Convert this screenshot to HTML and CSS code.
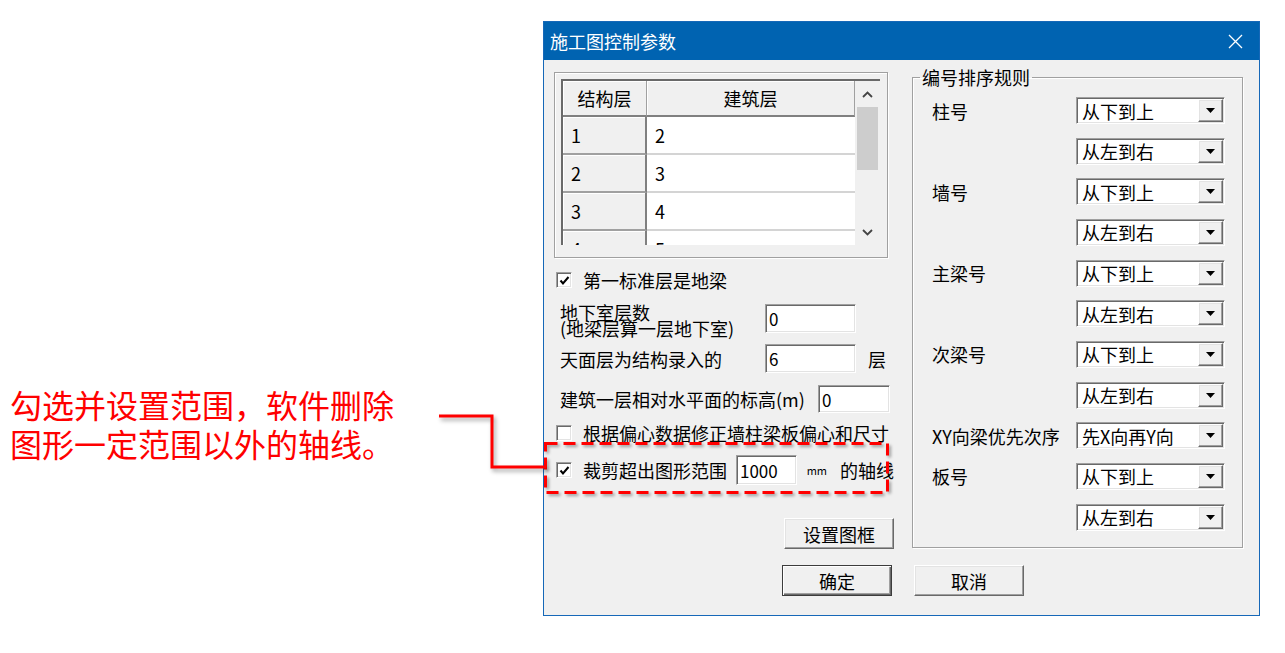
FILE: index.html
```html
<!DOCTYPE html>
<html lang="zh-CN">
<head>
  <meta charset="UTF-8">
  <title>施工图控制参数</title>
  <link rel="stylesheet" href="styles.css">
</head>
<body>
<div class="page">
  <!-- Callout text on the left -->
  <div class="note">
    <p class="note-text">勾选并设置范围，软件删除<br>图形一定范围以外的轴线。</p>
    <svg class="connector" width="112" height="64" viewBox="0 0 112 64">
      <polyline points="3,6 56,6 56,57 110,57" fill="none" stroke="#ff0000" stroke-width="3"/>
    </svg>
  </div>

  <!-- Dialog -->
  <div class="dialog">
    <div class="titlebar">
      <span>施工图控制参数</span>
      <svg class="close" width="15" height="15" viewBox="0 0 15 15">
        <path d="M1 1 L14 14 M14 1 L1 14" stroke="#fff" stroke-width="1.3"/>
      </svg>
    </div>

    <div class="dialog-body">
      <div class="left-col">
        <div class="table-frame">
          <div class="grid-wrap">
            <div class="grid">
              <div class="cell head">结构层</div>
              <div class="cell head">建筑层</div>
              <div class="cell rowhead">1</div>
              <div class="cell data">2</div>
              <div class="cell rowhead">2</div>
              <div class="cell data">3</div>
              <div class="cell rowhead">3</div>
              <div class="cell data">4</div>
              <div class="cell rowhead">4</div>
              <div class="cell data">5</div>
            </div>
            <div class="vscroll">
              <div class="sb-btn">
                <svg width="11" height="7" viewBox="0 0 11 7"><polyline points="1,6 5.5,1.5 10,6" fill="none" stroke="#444" stroke-width="1.8"/></svg>
              </div>
              <div class="sb-thumb"></div>
              <div class="sb-track"></div>
              <div class="sb-btn">
                <svg width="11" height="7" viewBox="0 0 11 7"><polyline points="1,1 5.5,5.5 10,1" fill="none" stroke="#444" stroke-width="1.8"/></svg>
              </div>
            </div>
          </div>
        </div>

        <div class="check-row row-first">
          <span class="checkbox"><svg width="13" height="13" viewBox="0 0 13 13"><polyline points="2.5,6.5 5,9.5 10.5,3" fill="none" stroke="#000" stroke-width="2"/></svg></span>
          <span class="check-text">第一标准层是地梁</span>
        </div>

        <div class="field-row row-basement">
          <span class="field-label two-line">地下室层数<br>(地梁层算一层地下室)</span>
          <span class="textbox tb-mid">0</span>
        </div>

        <div class="field-row row-roof">
          <span class="field-label">天面层为结构录入的</span>
          <span class="textbox tb-mid">6</span>
          <span class="unit">层</span>
        </div>

        <div class="field-row row-level">
          <span class="field-label label-long">建筑一层相对水平面的标高(m)</span>
          <span class="textbox tb-short">0</span>
        </div>

        <div class="check-row row-eccentric">
          <span class="checkbox"></span>
          <span class="check-text">根据偏心数据修正墙柱梁板偏心和尺寸</span>
        </div>

        <div class="check-row row-clip">
          <span class="checkbox"><svg width="13" height="13" viewBox="0 0 13 13"><polyline points="2.5,6.5 5,9.5 10.5,3" fill="none" stroke="#000" stroke-width="2"/></svg></span>
          <span class="check-text">裁剪超出图形范围</span>
          <span class="textbox tb-clip">1000</span>
          <span class="mm">mm</span>
          <span class="axis-text">的轴线</span>
        </div>

        <button class="btn btn-frame">设置图框</button>
      </div>

      <fieldset class="group">
        <legend>编号排序规则</legend>
        <div class="rules">
          <span class="rule-label">柱号</span>
          <div class="combo"><span>从下到上</span><span class="drop"><svg width="9" height="5" viewBox="0 0 9 5"><polygon points="0,0 9,0 4.5,5" fill="#000"/></svg></span></div>
          <span></span>
          <div class="combo"><span>从左到右</span><span class="drop"><svg width="9" height="5" viewBox="0 0 9 5"><polygon points="0,0 9,0 4.5,5" fill="#000"/></svg></span></div>

          <span class="rule-label">墙号</span>
          <div class="combo"><span>从下到上</span><span class="drop"><svg width="9" height="5" viewBox="0 0 9 5"><polygon points="0,0 9,0 4.5,5" fill="#000"/></svg></span></div>
          <span></span>
          <div class="combo"><span>从左到右</span><span class="drop"><svg width="9" height="5" viewBox="0 0 9 5"><polygon points="0,0 9,0 4.5,5" fill="#000"/></svg></span></div>

          <span class="rule-label">主梁号</span>
          <div class="combo"><span>从下到上</span><span class="drop"><svg width="9" height="5" viewBox="0 0 9 5"><polygon points="0,0 9,0 4.5,5" fill="#000"/></svg></span></div>
          <span></span>
          <div class="combo"><span>从左到右</span><span class="drop"><svg width="9" height="5" viewBox="0 0 9 5"><polygon points="0,0 9,0 4.5,5" fill="#000"/></svg></span></div>

          <span class="rule-label">次梁号</span>
          <div class="combo"><span>从下到上</span><span class="drop"><svg width="9" height="5" viewBox="0 0 9 5"><polygon points="0,0 9,0 4.5,5" fill="#000"/></svg></span></div>
          <span></span>
          <div class="combo"><span>从左到右</span><span class="drop"><svg width="9" height="5" viewBox="0 0 9 5"><polygon points="0,0 9,0 4.5,5" fill="#000"/></svg></span></div>

          <span class="rule-label">XY向梁优先次序</span>
          <div class="combo"><span>先X向再Y向</span><span class="drop"><svg width="9" height="5" viewBox="0 0 9 5"><polygon points="0,0 9,0 4.5,5" fill="#000"/></svg></span></div>

          <span class="rule-label">板号</span>
          <div class="combo"><span>从下到上</span><span class="drop"><svg width="9" height="5" viewBox="0 0 9 5"><polygon points="0,0 9,0 4.5,5" fill="#000"/></svg></span></div>
          <span></span>
          <div class="combo"><span>从左到右</span><span class="drop"><svg width="9" height="5" viewBox="0 0 9 5"><polygon points="0,0 9,0 4.5,5" fill="#000"/></svg></span></div>
        </div>
      </fieldset>
    </div>

    <div class="dialog-foot">
      <button class="btn btn-default">确定</button>
      <button class="btn">取消</button>
    </div>

    <!-- Red dashed highlight over the clip option -->
    <svg class="highlight" width="346" height="53" viewBox="0 0 346 53">
      <rect x="1.5" y="1.5" width="342" height="49" fill="none" stroke="#ff0000" stroke-width="3" stroke-dasharray="12 6"/>
    </svg>
  </div>
</div>
</body>
</html>
```

FILE: styles.css
```css
body {
  margin: 0;
  background: #fff;
  font-family: "Noto Sans CJK SC", "Noto Sans", sans-serif;
}

.page {
  display: flex;
  align-items: flex-start;
  height: 653px;
  overflow: hidden;
}

/* Callout */
.note {
  position: relative;
  width: 543px;
  height: 653px;
  flex-shrink: 0;
}

.note-text {
  margin: 385px 0 0 10px;
  font-size: 32px;
  line-height: 39px;
  color: #ff0000;
}

.connector {
  position: absolute;
  left: 436px;
  top: 410px;
  z-index: 2;
  overflow: visible;
  filter: drop-shadow(2px 3px 2px rgba(0,0,0,0.35));
}

/* Dialog frame */
.dialog {
  position: relative;
  width: 717px;
  height: 595px;
  margin-top: 21px;
  box-sizing: border-box;
  border: 1px solid #1668b8;
  background: #f0f0f0;
  font-size: 18px;
  color: #000;
  flex-shrink: 0;
}

.titlebar {
  height: 38px;
  background: #0063b1;
  color: #fff;
  display: flex;
  align-items: center;
  justify-content: space-between;
  padding: 0 16px 0 6px;
  font-size: 18px;
}

.dialog-body {
  display: flex;
  align-items: flex-start;
  gap: 18px;
  padding: 8px 0 0 10px;
}

.left-col {
  width: 340px;
  margin-top: 4px;
  display: flex;
  flex-direction: column;
}

/* 3D helpers */
.textbox,
.combo,
.checkbox {
  border: 1px solid;
  border-color: #a0a0a0 #fff #fff #a0a0a0;
  box-shadow: inset 1px 1px 0 #696969, inset -1px -1px 0 #e3e3e3;
}

.btn,
.drop {
  border: 1px solid;
  border-color: #fff #696969 #696969 #fff;
  box-shadow: inset -1px -1px 0 #a0a0a0, inset 1px 1px 0 #e3e3e3;
  background: #f0f0f0;
}

/* Floor table */
.table-frame {
  width: 334px;
  height: 186px;
  box-sizing: border-box;
  border: 1px solid #a0a0a0;
  box-shadow: inset 1px 1px 0 #fff, 1px 1px 0 #fff;
  padding: 6px 0 0 6px;
}

.grid-wrap {
  display: flex;
  width: 319px;
  height: 166px;
  box-sizing: border-box;
  border-top: 2px solid #696969;
  border-left: 2px solid #696969;
  background: #fff;
  overflow: hidden;
}

.grid {
  display: grid;
  grid-template-columns: 84px 208px;
  grid-template-rows: 36px 38px 38px 38px 38px;
  width: 292px;
}

.cell {
  display: flex;
  align-items: center;
  box-sizing: border-box;
  font-size: 18px;
}

.head {
  justify-content: center;
  background: #f0f0f0;
  border-right: 1px solid #a0a0a0;
  border-bottom: 2px solid #808080;
  box-shadow: inset 1px 1px 0 #fff;
}

.rowhead {
  padding-left: 8px;
  background: #f0f0f0;
  border-right: 2px solid #808080;
  border-bottom: 2px solid #a0a0a0;
  box-shadow: inset 1px 1px 0 #fff;
}

.data {
  padding-left: 8px;
  border-bottom: 2px solid #d4d4d4;
}

.vscroll {
  width: 25px;
  display: flex;
  flex-direction: column;
  background: #f0f0f0;
}

.sb-btn {
  height: 26px;
  display: flex;
  align-items: center;
  justify-content: center;
}

.sb-thumb {
  height: 63px;
  margin: 0 2px;
  background: #cdcdcd;
}

.sb-track {
  flex: 1;
}

/* Option rows */
.check-row {
  display: flex;
  align-items: center;
  height: 20px;
  padding-left: 2px;
}

.checkbox {
  width: 16px;
  height: 16px;
  box-sizing: border-box;
  background: #fff;
  display: flex;
  align-items: center;
  justify-content: center;
  flex-shrink: 0;
}

.check-text {
  margin-left: 11px;
  white-space: nowrap;
}

.row-first {
  margin-top: 12px;
}

.field-row {
  display: flex;
  align-items: center;
}

.field-label {
  width: 205px;
  padding-left: 6px;
  white-space: nowrap;
}

.two-line {
  line-height: 16px;
  align-self: flex-start;
}

.label-long {
  width: 258px;
}

.textbox {
  box-sizing: border-box;
  height: 29px;
  background: #fff;
  padding-left: 3px;
  font-size: 17px;
  display: flex;
  align-items: center;
}

.tb-mid {
  width: 91px;
}

.tb-short {
  width: 72px;
  height: 28px;
}

.tb-clip {
  width: 62px;
  height: 30px;
  margin-left: 9px;
}

.row-basement {
  height: 29px;
  margin-top: 14px;
}

.row-roof {
  margin-top: 11px;
}

.unit {
  margin-left: 12px;
}

.row-level {
  margin-top: 12px;
}

.row-eccentric {
  margin-top: 10px;
}

.row-clip {
  height: 30px;
  margin-top: 12px;
}

.mm {
  margin-left: 10px;
  font-size: 11px;
}

.axis-text {
  margin-left: 13px;
  white-space: nowrap;
}

/* Buttons */
.btn {
  width: 110px;
  height: 31px;
  padding: 0;
  font-family: inherit;
  font-size: 18px;
  color: #000;
}

.btn-frame {
  align-self: flex-end;
  margin-top: 33px;
}

.btn-default {
  border-color: #3c3c3c;
  box-shadow: inset 1px 1px 0 #fff, inset -1px -1px 0 #696969, inset -2px -2px 0 #a0a0a0;
}

.dialog-foot {
  display: flex;
  gap: 22px;
  padding-left: 238px;
  margin-top: 16px;
}

/* Numbering rules group */
.group {
  margin: 0;
  padding: 0;
  width: 331px;
  height: 480px;
  box-sizing: border-box;
  border: 1px solid #a0a0a0;
  box-shadow: inset 1px 1px 0 #fff, 1px 1px 0 #fff;
  min-width: 0;
}

.group legend {
  font-size: 18px;
  line-height: 18px;
  padding: 0 2px;
  margin-left: 7px;
}

.rules {
  display: grid;
  grid-template-columns: 144px 149px;
  grid-auto-rows: 27px;
  row-gap: 13.67px;
  align-items: center;
  padding: 11px 0 0 19px;
}

.rule-label {
  white-space: nowrap;
}

.combo {
  box-sizing: border-box;
  width: 149px;
  height: 27px;
  background: #fff;
  display: flex;
  align-items: center;
  justify-content: space-between;
  padding-left: 5px;
  font-size: 18px;
}

.drop {
  box-sizing: border-box;
  width: 25px;
  height: 23px;
  margin-right: 1px;
  display: flex;
  align-items: center;
  justify-content: center;
}

/* Overlay */
.highlight {
  position: absolute;
  left: 0;
  top: 420px;
  filter: drop-shadow(2px 2px 1.5px rgba(0,0,0,0.35));
}
```
